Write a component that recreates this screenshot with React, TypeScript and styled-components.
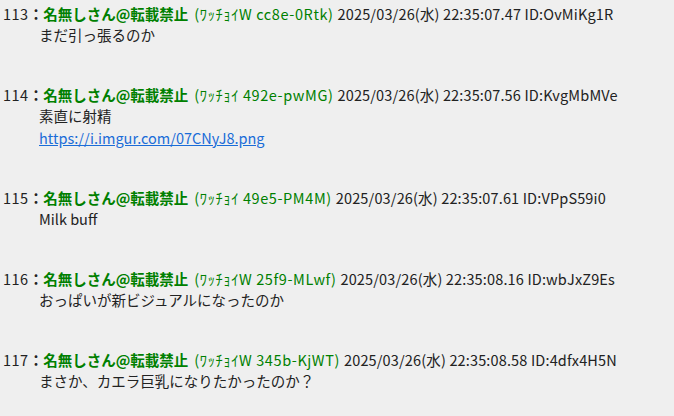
import styled, { createGlobalStyle } from 'styled-components';

type Post = {
  no: number;
  trip: string;
  date: string;
  id: string;
  lines: string[];
  link?: string;
};

const posts: Post[] = [
  {
    no: 113,
    trip: 'ﾜｯﾁｮｲW cc8e-0Rtk',
    date: '2025/03/26(水) 22:35:07.47',
    id: 'OvMiKg1R',
    lines: ['まだ引っ張るのか'],
  },
  {
    no: 114,
    trip: 'ﾜｯﾁｮｲ 492e-pwMG',
    date: '2025/03/26(水) 22:35:07.56',
    id: 'KvgMbMVe',
    lines: ['素直に射精'],
    link: 'https://i.imgur.com/07CNyJ8.png',
  },
  {
    no: 115,
    trip: 'ﾜｯﾁｮｲ 49e5-PM4M',
    date: '2025/03/26(水) 22:35:07.61',
    id: 'VPpS59i0',
    lines: ['Milk buff'],
  },
  {
    no: 116,
    trip: 'ﾜｯﾁｮｲW 25f9-MLwf',
    date: '2025/03/26(水) 22:35:08.16',
    id: 'wbJxZ9Es',
    lines: ['おっぱいが新ビジュアルになったのか'],
  },
  {
    no: 117,
    trip: 'ﾜｯﾁｮｲW 345b-KjWT',
    date: '2025/03/26(水) 22:35:08.58',
    id: '4dfx4H5N',
    lines: ['まさか、カエラ巨乳になりたかったのか？'],
  },
];

const GlobalStyle = createGlobalStyle`
  html, body {
    margin: 0;
    padding: 0;
    background: #efefef;
  }
  body {
    font-family: "Noto Sans CJK JP", "Noto Sans", sans-serif;
    color: #222;
  }
`;

export default function App() {
  return (
    <>
      <GlobalStyle />
      <Thread>
        {posts.map((p) => (
          <PostBlock key={p.no}>
            <Header>
              <Num>{p.no}</Num>
              <Colon>：</Colon>
              <Name>名無しさん@転載禁止</Name>
              <Trip>({p.trip})</Trip>
              <Meta>
                {p.date} ID:{p.id}
              </Meta>
            </Header>
            <Body>
              {p.lines.map((l) => (
                <Line key={l}>{l}</Line>
              ))}
              {p.link && (
                <Line>
                  <Link href={p.link}>{p.link}</Link>
                </Line>
              )}
            </Body>
          </PostBlock>
        ))}
      </Thread>
    </>
  );
}

const Thread = styled.div`
  padding: 3px 0 0 3px;
`;

const PostBlock = styled.div`
  margin-bottom: 38px;
`;

const Header = styled.div`
  display: flex;
  align-items: baseline;
  height: 21px;
  line-height: 21px;
  font-size: 14.5px;
  white-space: nowrap;
`;

const Num = styled.span`
  color: #222;
  letter-spacing: 0.5px;
`;

const Colon = styled.span`
  color: #222;
  font-weight: bold;
`;

const Name = styled.b`
  color: #008000;
  font-weight: bold;
`;

const Trip = styled.span`
  color: #008000;
  margin-left: 6px;
  letter-spacing: 0.6px;
`;

const Meta = styled.span`
  color: #222;
  margin-left: 4px;
  letter-spacing: 0.15px;
`;

const Body = styled.div`
  margin-left: 36px;
  font-size: 14.5px;
`;

const Line = styled.div`
  line-height: 22px;
  white-space: nowrap;
`;

const Link = styled.a`
  color: #1a6cd8;
  text-decoration: underline;
`;
